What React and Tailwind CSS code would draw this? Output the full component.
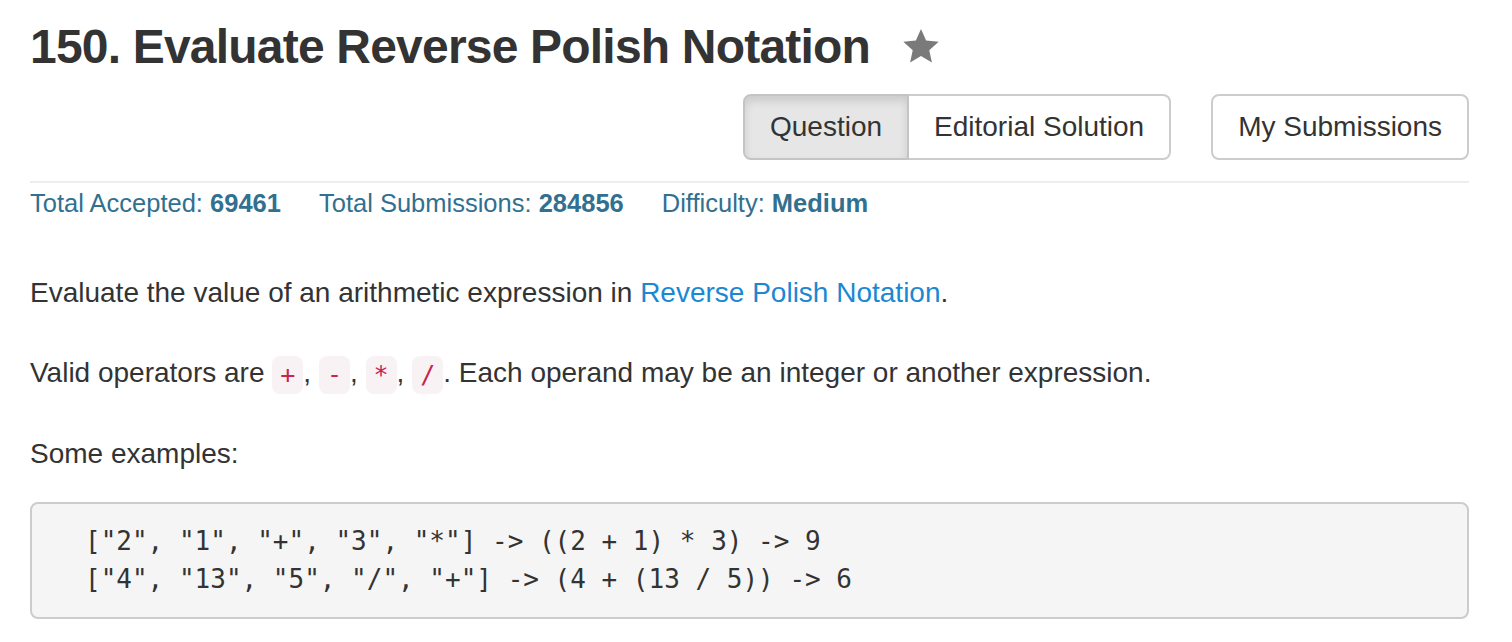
import { useState } from 'react';

const sans = { fontFamily: '"Liberation Sans", Arial, sans-serif' };
const mono = { fontFamily: '"DejaVu Sans Mono", "Liberation Mono", monospace' };

function Star() {
  return (
    <svg width="40" height="38" viewBox="0 0 24 23" className="shrink-0">
      <path
        d="M12 0.6 L15.1 7.6 L22.7 8.3 L17 13.4 L18.6 20.9 L12 17 L5.4 20.9 L7 13.4 L1.3 8.3 L8.9 7.6 Z"
        fill="#7a7a7a"
      />
    </svg>
  );
}

function Op({ children }) {
  return (
    <code
      className="inline-block px-[8px] rounded-[8px] bg-[#f9f2f4] text-[#c7254e] text-[25px] leading-[38px] align-middle"
      style={mono}
    >
      {children}
    </code>
  );
}

function App() {
  const [tab] = useState('question');

  return (
    <div className="bg-white text-[#333] min-h-[642px] pl-[30px]" style={sans}>
      <div className="w-[1439px]">
        {/* title */}
        <div className="flex items-center gap-[31px] pt-[21px]">
          <h3 className="text-[48px] leading-[52px] font-bold tracking-[-0.8px] text-[#333]">
            150. Evaluate Reverse Polish Notation
          </h3>
          <Star />
        </div>

        {/* tabs */}
        <div className="flex justify-end gap-[40px] mt-[21px]">
          <div className="flex">
            <button
              className={`h-[66px] px-[25px] text-[28px] text-[#333] border-2 border-[#c4c4c4] rounded-l-[8px] ${
                tab === 'question' ? 'bg-[#e6e6e6] shadow-[inset_0_5px_8px_rgba(0,0,0,0.12)] border-[#adadad]' : 'bg-white'
              }`}
            >
              Question
            </button>
            <button className="h-[66px] px-[25px] text-[28px] text-[#333] bg-white border-2 border-l-0 border-[#ccc] rounded-r-[8px]">
              Editorial Solution
            </button>
          </div>
          <button className="h-[66px] px-[25px] text-[28px] text-[#333] bg-white border-2 border-[#ccc] rounded-[8px]">
            My Submissions
          </button>
        </div>

        <div className="h-[2px] bg-[#eee] mt-[21px]" />

        {/* meta */}
        <div className="flex gap-[38px] text-[25.5px] leading-[36px] text-[#31708f] mt-[2px]">
          <span>
            Total Accepted: <b>69461</b>
          </span>
          <span>
            Total Submissions: <b>284856</b>
          </span>
          <span>
            Difficulty: <b>Medium</b>
          </span>
        </div>

        {/* description */}
        <div className="text-[28px] leading-[40px] mt-[52px] flex flex-col gap-[40px]">
          <p>
            Evaluate the value of an arithmetic expression in{' '}
            <a className="text-[#1a88d3]">Reverse Polish Notation</a>.
          </p>
          <p>
            Valid operators are <Op>+</Op>, <Op>-</Op>, <Op>*</Op>, <Op>/</Op>. Each operand may be an integer or
            another expression.
          </p>
          <p>Some examples:</p>
        </div>

        <pre
          className="mt-[28px] bg-[#f5f5f5] border-2 border-[#ccc] rounded-[8px] pl-[53px] pt-[18px] pb-[19px] text-[26px] leading-[38px] text-[#333]"
          style={mono}
        >
          {'["2", "1", "+", "3", "*"] -> ((2 + 1) * 3) -> 9\n["4", "13", "5", "/", "+"] -> (4 + (13 / 5)) -> 6'}
        </pre>
      </div>
    </div>
  );
}

export default App;
